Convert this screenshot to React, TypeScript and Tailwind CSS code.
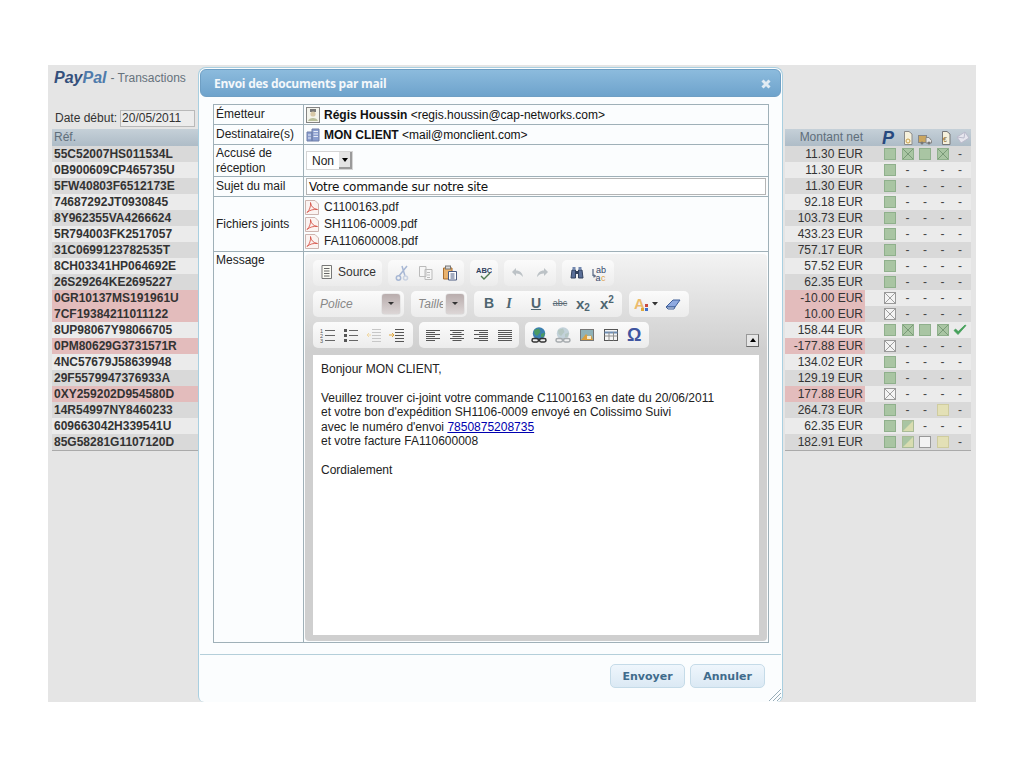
import React from "react";

const sans = "font-['Liberation_Sans',Arial,sans-serif]";

const ids = ["55C52007HS011534L","0B900609CP465735U","5FW40803F6512173E","74687292JT0930845","8Y962355VA4266624","5R794003FK2517057","31C0699123782535T","8CH03341HP064692E","26S29264KE2695227","0GR10137MS191961U","7CF19384211011122","8UP98067Y98066705","0PM80629G3731571R","4NC57679J58639948","29F5579947376933A","0XY259202D954580D","14R54997NY8460233","609663042H339541U","85G58281G1107120D"];
const nets = ["11.30","11.30","11.30","92.18","103.73","433.23","757.17","57.52","62.35","-10.00","10.00","158.44","-177.88","134.02","129.19","177.88","264.73","62.35","182.91"];
const st = ["gxgx-","g----","g----","g----","g----","g----","g----","g----","g----","w----","w----","gxgxc","w----","g----","g----","w----","g--y-","gh---","ghey-"];
const reds = [9, 10, 12, 15];

function Box({ k }: { k: string }) {
  if (k === "-") return <span className="w-[12px] text-center text-[12px] leading-[12px] text-[#444]">-</span>;
  if (k === "c")
    return (
      <svg width="14" height="12" viewBox="0 0 14 12" className="ml-[-1px]">
        <path d="M1 6.5 L5 10.5 L13 1.5 L12 1 L5.2 7.6 L2.6 5 Z" fill="#45a05a" stroke="#45a05a" strokeWidth="0.8" />
      </svg>
    );
  const bg = k === "g" || k === "x" ? "#a9c5a3" : k === "y" ? "#e3e0b6" : k === "h" ? "#d8dcb0" : "#f3f3f3";
  const bd = k === "g" || k === "x" ? "#8fb08c" : k === "y" ? "#cfcc9f" : k === "h" ? "#a9bb97" : "#999999";
  return (
    <svg width="12" height="12" viewBox="0 0 12 12">
      <rect x="0.5" y="0.5" width="11" height="11" fill={bg} stroke={bd} />
      {k === "h" && <path d="M1 1 H11 L1 11 Z" fill="#a9c5a3" />}
      {(k === "x" || k === "w") && <path d="M1 1 L11 11 M11 1 L1 11" stroke={k === "x" ? "#6f8f6d" : "#888888"} strokeWidth="0.8" />}
    </svg>
  );
}

function Pdf() {
  return (
    <svg width="14" height="15" viewBox="0 0 14 15" className="shrink-0">
      <path d="M.5 .5 H10 L13.5 4 V14.5 H.5 Z" fill="#fbf3f1" stroke="#cdb5b0" />
      <path d="M2 12.5 C4.5 10.5 6 6 5.5 2.5 C6 6.5 8.5 9 12.5 9.5 C9 9 4.5 10 2 12.5 Z" fill="none" stroke="#d6574c" strokeWidth="0.9" />
    </svg>
  );
}

function Group({ children, className = "" }: { children: React.ReactNode; className?: string }) {
  return <div className={`flex h-[26px] items-center rounded-[5px] bg-gradient-to-b from-[#fbfbfb] to-[#ececec] ${className}`}>{children}</div>;
}

function Ico({ children, w = 16 }: { children: React.ReactNode; w?: number }) {
  return <svg width={w} height="16" viewBox={`0 0 ${w} 16`} className="shrink-0">{children}</svg>;
}

function Align({ kind }: { kind: number }) {
  const rows = [3, 5, 7, 9, 11, 13];
  return (
    <Ico>
      {rows.map((y, i) => {
        const long = i % 2 === 0 || kind === 3;
        const len = long ? 14 : 9;
        const x = kind === 0 || kind === 3 ? 1 : kind === 1 ? (16 - len) / 2 : 15 - len;
        return <path key={y} d={`M${x} ${y}.5 h${len}`} stroke="#555" />;
      })}
    </Ico>
  );
}

function Globe({ dim = false }: { dim?: boolean }) {
  return (
    <Ico>
      <circle cx="8" cy="6.5" r="6.2" fill={dim ? "#c3d2da" : "#3b7fb0"} />
      <path d="M3 3 L8 1.5 L9.5 5 L6 9 L3.5 7 Z M10 7 L14 5.5 L12.5 10 L10 10 Z" fill={dim ? "#b5c7c2" : "#4a9a63"} />
      <rect x="1" y="11.5" width="6.5" height="3.5" rx="1.7" fill="none" stroke={dim ? "#a6abae" : "#333"} strokeWidth="1.5" />
      <rect x="8.5" y="11.5" width="6.5" height="3.5" rx="1.7" fill="none" stroke={dim ? "#a6abae" : "#333"} strokeWidth="1.5" />
    </Ico>
  );
}

function Drop() {
  return (
    <div className="flex h-[20px] w-[18px] items-center justify-center rounded-[3px] bg-gradient-to-b from-[#b9adad] to-[#dcd6d6] shadow-[0_0_1px_#777]">
      <div className="h-0 w-0 border-x-[3px] border-t-[3px] border-x-transparent border-t-[#333]" />
    </div>
  );
}

function Toolbar() {
  const tb = "font-['Liberation_Sans',sans-serif] font-bold text-[#4e6570]";
  return (
    <div className="flex flex-col gap-[5px]">
      <div className="flex gap-[6px]">
        <Group className="w-[69px] pb-[1px] pl-[6px] gap-[3px]">
          <Ico>
            <path d="M3 1.5 H12.5 V14.5 H3 Z" fill="#fbfbf4" stroke="#777" />
            <path d="M5 4.5 H10.5 M5 7 H10.5 M5 9.5 H10.5 M5 12 H10.5" stroke="#666" />
          </Ico>
          <span className={`text-[12px] text-[#333] ${sans}`}>Source</span>
        </Group>
        <Group className="w-[76px] pl-[6px] gap-[8px]">
          <Ico>
            <path d="M13 1 L5 11 M8 1 L11 11" stroke="#a7b7d4" strokeWidth="1.5" />
            <circle cx="4.5" cy="13" r="2.2" fill="none" stroke="#a7b7d4" strokeWidth="1.5" />
            <circle cx="11.5" cy="13" r="2" fill="none" stroke="#c9d2e2" strokeWidth="1.5" />
          </Ico>
          <Ico>
            <path d="M1.5 1.5 H8 V11.5 H1.5 Z M7 4.5 H14 V14.5 H7 Z" fill="#f6f6f6" stroke="#bbb" />
            <path d="M9 7.5 H12 M9 10 H12 M9 12.5 H12" stroke="#bbb" />
          </Ico>
          <Ico>
            <path d="M1.5 3 H10 V14 H1.5 Z" fill="#e9b26e" stroke="#a96d2c" />
            <rect x="3.5" y="1" width="5" height="3" fill="#d9d9d9" stroke="#777" />
            <path d="M6.5 6.5 H14.5 V15 H6.5 Z" fill="#fff" stroke="#4a5a80" />
            <path d="M8.5 9 H12.5 M8.5 11 H12.5 M8.5 13 H12.5" stroke="#4a5a80" />
          </Ico>
        </Group>
        <Group className="w-[28px] justify-center">
          <Ico>
            <text x="0" y="8" fontSize="7.5" fontWeight="700" fontFamily="Liberation Sans" fill="#30425f">ABC</text>
            <path d="M5 11 L8 14 L14 8" fill="none" stroke="#4f7a4f" strokeWidth="1.4" />
          </Ico>
        </Group>
        <Group className="w-[52px] pl-[6px] gap-[8px]">
          <Ico>
            <path d="M6 3 L2 7 L6 11 V8.5 C9 8.5 11 9.5 13 12 C12.5 8 10 5.5 6 5.5 Z" fill="#bcc2c6" />
          </Ico>
          <Ico>
            <path d="M10 3 L14 7 L10 11 V8.5 C7 8.5 5 9.5 3 12 C3.5 8 6 5.5 10 5.5 Z" fill="#bcc2c6" />
          </Ico>
        </Group>
        <Group className="w-[52px] pl-[7px] gap-[6px]">
          <Ico>
            <path d="M2 13 L3 5 H6.5 V13 Z M9.5 13 V5 H13 L14 13 Z" fill="#5a6f98" stroke="#33425f" />
            <rect x="3.5" y="2" width="3" height="3" fill="#7287ae" />
            <rect x="9.5" y="2" width="3" height="3" fill="#7287ae" />
            <rect x="6.5" y="6" width="3" height="3" fill="#33425f" />
          </Ico>
          <Ico>
            <text x="5" y="7.5" fontSize="9" fontFamily="Liberation Sans" fill="#35486b">ab</text>
            <text x="4.5" y="15.5" fontSize="9" fontFamily="Liberation Sans" fill="#35486b">a</text>
            <text x="10" y="15.5" fontSize="9" fontFamily="Liberation Sans" fill="#e0a24a">c</text>
            <path d="M2 4 V11 H4 M3 9.5 L4.5 11 L3 12.5" fill="none" stroke="#35486b" />
          </Ico>
        </Group>
      </div>
      <div className="flex gap-[7px]">
        <Group className="w-[91px] pl-[7px] pr-[4px] justify-between">
          <span className={`text-[12px] italic text-[#888] ${sans}`}>Police</span>
          <Drop />
        </Group>
        <Group className="w-[56px] pl-[7px] pr-[3px] justify-between">
          <span className={`w-[25px] overflow-hidden text-[12px] italic text-[#888] ${sans}`}>Taille</span>
          <Drop />
        </Group>
        <Group className="w-[148px] pl-[9px]">
          <span className={`w-[12px] text-center text-[14px] ${tb}`}>B</span>
          <span className="ml-[8px] w-[12px] text-center text-[14px] font-bold italic text-[#4e6570] font-['Liberation_Serif',serif]">I</span>
          <span className={`ml-[15px] w-[12px] text-center text-[14px] underline ${tb}`}>U</span>
          <span className="ml-[10px] w-[16px] text-center text-[9px] text-[#5b6b75] line-through font-['Liberation_Sans',sans-serif]">abc</span>
          <span className={`ml-[8px] flex w-[17px] items-end text-[15px] leading-none ${tb}`}>x<span className="mb-[-2px] text-[10px] leading-none">2</span></span>
          <span className={`ml-[7px] flex w-[17px] items-start text-[15px] leading-none ${tb}`}>x<span className="mt-[-1px] text-[10px] leading-none">2</span></span>
        </Group>
        <Group className="w-[60px] pl-[5px] gap-[5px]">
          <Ico w={26}>
            <text x="0" y="13" fontSize="15" fontWeight="700" fontFamily="Liberation Sans" fill="#ecbb6c">A</text>
            <rect x="11" y="8" width="3" height="3" fill="#c94a3f" />
            <rect x="11" y="12" width="3" height="3" fill="#3f6fc9" />
            <rect x="7" y="12" width="3" height="3" fill="#e0a93a" />
            <path d="M18 6 H24 L21 9.5 Z" fill="#333" />
          </Ico>
          <Ico>
            <path d="M1 11 L8 4 H15 L10 11 Z" fill="#8ea9e0" stroke="#3f5f99" />
            <path d="M1 11 L3 13 H9 L10 11 Z" fill="#dfe6f3" stroke="#3f5f99" />
          </Ico>
        </Group>
      </div>
      <div className="relative flex gap-[6px]">
        <Group className="w-[100px] pl-[7px] gap-[7px]">
          <Ico>
            <text x="0" y="6" fontSize="5.5" fontFamily="Liberation Sans" fill="#555">1</text>
            <text x="0" y="11" fontSize="5.5" fontFamily="Liberation Sans" fill="#555">2</text>
            <text x="0" y="16" fontSize="5.5" fontFamily="Liberation Sans" fill="#555">3</text>
            <path d="M5 3.5 H15 M5 8.5 H15 M5 13.5 H15" stroke="#666" />
          </Ico>
          <Ico>
            <rect x="1" y="2" width="3" height="3" fill="#555" />
            <rect x="1" y="7" width="3" height="3" fill="#555" />
            <rect x="1" y="12" width="3" height="3" fill="#555" />
            <path d="M6 3.5 H15 M6 8.5 H15 M6 13.5 H15" stroke="#666" />
          </Ico>
          <Ico>
            <path d="M1 8 H5 M3 6 L1 8 L3 10" fill="none" stroke="#f1d9a6" />
            <path d="M6 2.5 H15 M6 5.5 H15 M6 8.5 H15 M6 11.5 H15 M6 14.5 H15" stroke="#c7c7c7" />
          </Ico>
          <Ico>
            <path d="M0 8 H5 M3 6 L5 8 L3 10" fill="none" stroke="#e2a93f" />
            <path d="M6 2.5 H15 M6 5.5 H15 M6 8.5 H15 M6 11.5 H15 M6 14.5 H15" stroke="#555" />
          </Ico>
        </Group>
        <Group className="w-[100px] pl-[6px] gap-[8px]">
          <Align kind={0} />
          <Align kind={1} />
          <Align kind={2} />
          <Align kind={3} />
        </Group>
        <Group className="w-[124px] pl-[6px] gap-[8px]">
          <Globe />
          <Globe dim />
          <Ico>
            <rect x="1.5" y="2.5" width="13" height="11" fill="#8fb2b8" stroke="#777" />
            <path d="M2 13 L7 7 L10 10 L12 8 L14 13 Z" fill="#d99f3f" />
            <rect x="8" y="9" width="4" height="3" fill="#f3ead0" />
          </Ico>
          <Ico>
            <rect x="1.5" y="2.5" width="13" height="11" fill="#f5f5f5" stroke="#555" />
            <path d="M1.5 5.5 H14.5" stroke="#6f8fb5" strokeWidth="2" />
            <path d="M1.5 9 H14.5 M6 5 V13.5 M10.5 5 V13.5" stroke="#8f8f8f" />
          </Ico>
          <span className="text-[18px] font-bold leading-none text-[#3f55a0] font-['Liberation_Sans',sans-serif]">Ω</span>
        </Group>
        <div className="absolute right-[0px] top-[12px] flex h-[13px] w-[13px] items-center justify-center border border-[#999] border-r-[#666] border-b-[#666] bg-[#e6e6e6]">
          <div className="h-0 w-0 border-x-[3px] border-b-[4px] border-x-transparent border-b-black" />
        </div>
      </div>
    </div>
  );
}

function Row({ label, h, children, cls = "items-center" }: { label: React.ReactNode; h: string; children: React.ReactNode; cls?: string }) {
  return (
    <div className={`flex border-b border-[#9fb0b8] last:border-b-0 ${h}`}>
      <div className={`flex w-[90px] shrink-0 border-r border-[#9fb0b8] pl-[2px] text-[12px] leading-[15px] text-[#222] ${cls}`}>{label}</div>
      <div className="flex min-w-0 flex-1 items-center">{children}</div>
    </div>
  );
}

function Dialog() {
  return (
    <div className={`absolute left-[150px] top-[2px] flex h-[635px] w-[585px] flex-col rounded-t-[8px] rounded-b-[6px] border border-b-0 border-[#a9cfe0] bg-[#fbfdfe] px-[1px] pt-[1px] ${sans}`}>
      <div className="flex h-[28px] shrink-0 items-center justify-between rounded-[6px] border border-[#6f9fc4] bg-gradient-to-b from-[#8cbbdd] to-[#6ea3cc] pl-[13px] pr-[9px] pt-[2px]">
        <span className="text-[12px] font-bold text-[#f4f8fb] font-['Open_Sans',sans-serif] tracking-[-0.25px]">Envoi des documents par mail</span>
        <svg width="10" height="10" viewBox="0 0 10 10">
          <path d="M1.5 1.5 L8.5 8.5 M8.5 1.5 L1.5 8.5" stroke="#e1ebf3" strokeWidth="3" />
        </svg>
      </div>
      <div className="mx-[13px] mt-[7px] w-[556px] border border-[#9fb0b8]">
        <Row label="Émetteur" h="h-[20px]">
          <div className="flex items-center gap-[3px] pl-[1px] pt-[1px]">
            <svg width="16" height="18" viewBox="0 0 16 18" className="shrink-0">
              <rect x="1.5" y="1.5" width="13" height="15" fill="#f4f4ec" stroke="#111" strokeDasharray="1 1" />
              <path d="M5 3 H11 V6 H5 Z" fill="#777" />
              <circle cx="8" cy="8" r="2.6" fill="#d8c9a8" />
              <path d="M3 15 C4 11 12 11 13 15 Z" fill="#b9bf9a" />
            </svg>
            <span className="text-[12px] text-[#111]"><b>Régis Houssin</b> &lt;regis.houssin@cap-networks.com&gt;</span>
          </div>
        </Row>
        <Row label="Destinataire(s)" h="h-[20px]">
          <div className="flex items-center gap-[4px] pl-[2px] pt-[1px]">
            <svg width="14" height="15" viewBox="0 0 14 15" className="mt-[-2px] shrink-0">
              <path d="M1 5 H6 V14 H1 Z M6 2 H13 V14 H6 Z" fill="#8c9fd0" stroke="#6f7fa8" />
              <path d="M7.5 4.5 H12 M7.5 7 H12 M7.5 9.5 H12 M2 8 H5 M2 11 H5" stroke="#e6ecf8" />
            </svg>
            <span className="text-[12px] text-[#111]"><b>MON CLIENT</b> &lt;mail@monclient.com&gt;</span>
          </div>
        </Row>
        <Row label={<span>Accusé de<br />réception</span>} h="h-[32px]">
          <div className="ml-[2px] flex h-[19px] w-[47px] items-center justify-between border border-[#d5d5d5] bg-white pl-[5px] text-[12px] text-[#222]">
            <span>Non</span>
            <span className="flex h-[17px] w-[13px] items-center justify-center bg-[#e4e4e4] shadow-[inset_-2px_-2px_0_#9a9a9a]">
              <span className="mb-[2px] mr-[2px] h-0 w-0 border-x-[3px] border-t-[4px] border-x-transparent border-t-black" />
            </span>
          </div>
        </Row>
        <Row label="Sujet du mail" h="h-[20px]">
          <div className="ml-[2px] flex h-[17px] w-[460px] items-center border border-[#b5b5b5] bg-white pl-[2px] text-[12px] tracking-[-0.25px] text-[#111] font-['DejaVu_Sans',sans-serif]">Votre commande sur notre site</div>
        </Row>
        <Row label="Fichiers joints" h="h-[55px]">
          <div className="flex flex-col pt-[1px] text-[12px] leading-[17px] text-[#222]">
            {["C1100163.pdf", "SH1106-0009.pdf", "FA110600008.pdf"].map((f) => (
              <div key={f} className="flex items-center gap-[5px] pl-[1px]"><Pdf />{f}</div>
            ))}
          </div>
        </Row>
        <Row label="Message" h="h-[390px]" cls="items-start pt-[1px]">
          <div className="mx-[1px] flex h-[387px] w-[462px] flex-col rounded-[4px] bg-gradient-to-b from-[#f3f3f3] via-[#cfcfcf] via-[25%] to-[#cfcfcf] px-[8px] pb-[6px] pt-[6px]">
            <Toolbar />
            <div className="mt-[7px] flex-1 bg-white px-[8px] pt-[7px] text-[12px] leading-[14.5px] text-[#222]">
              <div>Bonjour MON CLIENT,</div>
              <div className="h-[14.5px]" />
              <div>Veuillez trouver ci-joint votre commande C1100163 en date du 20/06/2011</div>
              <div>et votre bon d'expédition SH1106-0009 envoyé en Colissimo Suivi</div>
              <div>avec le numéro d'envoi <span className="text-[#0000b0] underline">7850875208735</span></div>
              <div>et votre facture FA110600008</div>
              <div className="h-[14.5px]" />
              <div>Cordialement</div>
            </div>
          </div>
        </Row>
      </div>
      <div className="mt-[11px] border-t border-[#b4cfda]" />
      <div className="flex justify-end gap-[5px] pr-[16px] pt-[9px]">
        {["Envoyer", "Annuler"].map((t) => (
          <div key={t} className="flex h-[24px] w-[75px] items-center justify-center rounded-[5px] border border-[#c5dbe8] bg-gradient-to-b from-[#eff6fc] to-[#dbe9f4] pt-[2px] text-[11px] font-bold text-[#3f6b8c] font-['DejaVu_Sans',sans-serif]">{t}</div>
        ))}
      </div>
      <svg width="14" height="14" viewBox="0 0 14 14" className="absolute bottom-[0px] right-[0px]">
        <path d="M1 13 L13 1 M5 13 L13 5 M9 13 L13 9" stroke="#7f98a6" strokeWidth="0.8" />
      </svg>
    </div>
  );
}

function Header({ children, className = "" }: { children: React.ReactNode; className?: string }) {
  return <div className={`flex h-[17px] items-center bg-gradient-to-b from-[#c5d0d8] to-[#aebcc7] text-[12px] text-[#5f6e7a] ${className}`}>{children}</div>;
}

export default function App() {
  return (
    <div className={`h-[768px] w-[1024px] bg-white pl-[48px] pt-[65px] ${sans}`}>
      <div className="relative flex h-[637px] w-[928px] justify-between bg-[#e5e5e5]">
        <div className="ml-[4px] w-[146px]">
          <div className="flex h-[44px] items-start pl-[2px] pt-[3px]">
            <span className="text-[16px] font-bold italic leading-[20px] text-[#4f7bab]"><span className="text-[#34507c]">Pay</span>Pal</span>
            <span className="ml-[4px] mt-[3px] text-[12px] leading-[14px] text-[#66727c]">- Transactions</span>
          </div>
          <div className="flex h-[18px] items-center pl-[3px] text-[12px] text-[#333]">
            Date début:
            <div className="ml-[3px] flex h-[17px] w-[75px] items-center border border-[#b9b9b9] bg-[#ececec] pl-[1px]">20/05/2011</div>
          </div>
          <div className="h-[2px]" />
          <Header className="pb-[1px] pl-[2px]">Réf.</Header>
          <div className="border-b border-[#aaa]">
            {ids.map((id, i) => (
              <div key={id} className={`flex h-[16px] items-center pl-[2px] text-[12px] font-bold text-[#333] ${reds.includes(i) ? "bg-[#e3bcbc]" : i % 2 === 0 ? "bg-[#d9d9d9]" : "bg-[#ebebeb]"}`}>{id}</div>
            ))}
          </div>
        </div>
        <div className="mr-[5px] w-[186px] pt-[64px]">
          <Header>
            <span className="w-[80px] pb-[1px] pr-[2px] text-right">Montant net</span>
            <div className="flex items-center pl-[17px]">
              <span className="w-[14px] text-[18px] font-bold italic leading-none text-[#27497e]">P</span>
              <div className="ml-[6px]"><Ico w={12}><path d="M2.5 1.5 H7 L10 4 V14.5 H2.5 Z" fill="#f6f1dc" stroke="#8b8b8b" /><circle cx="6" cy="11" r="2" fill="none" stroke="#c9a04a" /></Ico></div>
              <div className="ml-[3px]"><Ico><rect x="1.5" y="5.5" width="8" height="7" fill="#cba65f" stroke="#888" /><path d="M9 7.5 H12 L14.5 10.5 V13 H9 Z" fill="#e4e4e4" stroke="#888" /><circle cx="5" cy="13" r="1.5" fill="#777" /><circle cx="12" cy="13" r="1.5" fill="#777" /></Ico></div>
              <div className="ml-[7px]"><Ico w={12}><path d="M2.5 1.5 H7 L10 4 V14.5 H2.5 Z" fill="#f6f1dc" stroke="#777" /><text x="3" y="12" fontSize="7" fill="#8a6a2a" fontFamily="Liberation Sans">€</text></Ico></div>
              <div className="ml-[4px]"><Ico w={14}><path d="M1 7 L9 2 L13 8 L5 13 Z" fill="#e6e6ee" stroke="#bbc" /><path d="M1 7 L8 8 L9 2" fill="none" stroke="#bbc" /></Ico></div>
            </div>
          </Header>
          <div className="border-b border-[#aaa]">
            {nets.map((n, i) => (
              <div key={i} className={`flex h-[16px] items-center ${i % 2 === 0 ? "bg-[#d9d9d9]" : "bg-[#ebebeb]"}`}>
                <div className={`flex h-full w-[80px] items-center justify-end pr-[2px] text-[12px] text-[#333] ${reds.includes(i) ? "bg-[#e3bcbc]" : ""}`}>{n} EUR</div>
                <div className="flex items-center gap-[5.5px] pl-[19px]">
                  {st[i].split("").map((k, j) => <Box key={j} k={k} />)}
                </div>
              </div>
            ))}
          </div>
        </div>
        <Dialog />
      </div>
    </div>
  );
}
